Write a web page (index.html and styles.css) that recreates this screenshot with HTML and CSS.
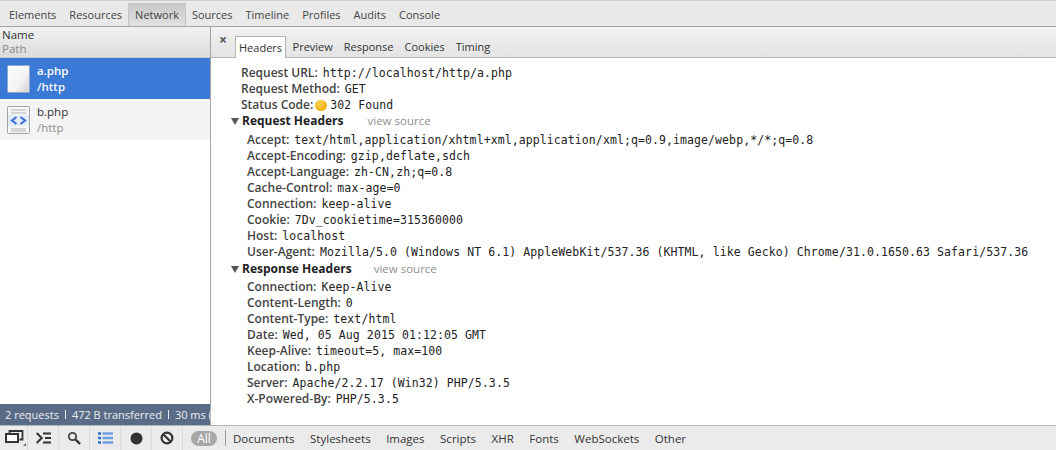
FILE: index.html
```html
<!DOCTYPE html>
<html lang="en">
<head>
<meta charset="utf-8">
<title>Network</title>
<link rel="stylesheet" href="styles.css">
</head>
<body>
<nav class="topbar">
  <span class="toptab">Elements</span>
  <span class="toptab">Resources</span>
  <span class="toptab active">Network</span>
  <span class="toptab">Sources</span>
  <span class="toptab">Timeline</span>
  <span class="toptab">Profiles</span>
  <span class="toptab">Audits</span>
  <span class="toptab">Console</span>
</nav>
<main class="main">
  <aside class="side">
    <div class="side-head"><div>Name</div><div class="dim">Path</div></div>
    <div class="file selected">
      <svg class="ficon" width="23" height="28" viewBox="0 0 23 28"><defs><linearGradient id="pg" x1="0" y1="0" x2="1" y2="1"><stop offset="0" stop-color="#fff"/><stop offset=".6" stop-color="#f3f3f3"/><stop offset="1" stop-color="#cfcfcf"/></linearGradient></defs><rect x=".5" y=".5" width="22" height="27" rx="1" fill="url(#pg)" stroke="#8fa8cc"/></svg>
      <div class="fname"><div>a.php</div><div class="fpath">/http</div></div>
    </div>
    <div class="file">
      <svg class="ficon" width="23" height="28" viewBox="0 0 23 28"><rect x=".5" y=".5" width="22" height="27" rx="1" fill="#f6f6f6" stroke="#a5a5a5"/><path d="M4 4h15M4 7h15M4 23h15M4 25h15" stroke="#b5b5b5"/><rect x="1" y="9" width="21" height="11" fill="#e4ecf8"/><path d="M9.500 11 5 14.500l4.500 3.500M13.500 11 18 14.500 13.500 18" fill="none" stroke="#3b74d6" stroke-width="2.200"/></svg>
      <div class="fname"><div>b.php</div><div class="fpath dim">/http</div></div>
    </div>
    <div class="side-fill"></div>
    <div class="summary">2 requests<i class="sep"></i>472 B transferred<i class="sep"></i>30 ms (</div>
  </aside>
  <section class="detail">
    <div class="tabs">
      <span class="close">×</span>
      <span class="tab active">Headers</span>
      <span class="tab">Preview</span>
      <span class="tab">Response</span>
      <span class="tab">Cookies</span>
      <span class="tab">Timing</span>
    </div>
    <div class="content">
      <div class="row top"><b>Request URL:</b><code>http://localhost/http/a.php</code></div>
      <div class="row top"><b>Request Method:</b><code>GET</code></div>
      <div class="row top"><b>Status Code:</b><i class="dot"></i><code>302 Found</code></div>
      <div class="sect sect-first"><i class="tri"></i><strong>Request Headers</strong><span class="vs vs1">view source</span></div>
      <div class="row"><b>Accept:</b><code>text/html,application/xhtml+xml,application/xml;q=0.9,image/webp,*/*;q=0.8</code></div>
      <div class="row"><b>Accept-Encoding:</b><code>gzip,deflate,sdch</code></div>
      <div class="row"><b>Accept-Language:</b><code>zh-CN,zh;q=0.8</code></div>
      <div class="row"><b>Cache-Control:</b><code>max-age=0</code></div>
      <div class="row"><b>Connection:</b><code>keep-alive</code></div>
      <div class="row"><b>Cookie:</b><code>7Dv_cookietime=315360000</code></div>
      <div class="row"><b>Host:</b><code>localhost</code></div>
      <div class="row"><b>User-Agent:</b><code>Mozilla/5.0 (Windows NT 6.1) AppleWebKit/537.36 (KHTML, like Gecko) Chrome/31.0.1650.63 Safari/537.36</code></div>
      <div class="sect sect-second"><i class="tri"></i><strong>Response Headers</strong><span class="vs">view source</span></div>
      <div class="row"><b>Connection:</b><code>Keep-Alive</code></div>
      <div class="row"><b>Content-Length:</b><code>0</code></div>
      <div class="row"><b>Content-Type:</b><code>text/html</code></div>
      <div class="row"><b>Date:</b><code>Wed, 05 Aug 2015 01:12:05 GMT</code></div>
      <div class="row"><b>Keep-Alive:</b><code>timeout=5, max=100</code></div>
      <div class="row"><b>Location:</b><code>b.php</code></div>
      <div class="row"><b>Server:</b><code>Apache/2.2.17 (Win32) PHP/5.3.5</code></div>
      <div class="row"><b>X-Powered-By:</b><code>PHP/5.3.5</code></div>
    </div>
  </section>
</main>
<footer class="bottombar">
  <span class="bt bt-first"><svg width="22" height="17" viewBox="0 0 22 17"><path d="M4.500 3V1h13v8.500h-3" fill="none" stroke="#333" stroke-width="1.800"/><rect x="1" y="4" width="12" height="8" fill="#fff" stroke="#333" stroke-width="2"/><path d="M21 13v3h-3z" fill="#666"/></svg></span>
  <span class="bt"><svg width="15" height="12" viewBox="0 0 15 12"><path d="m.7 1 5 5-5 5" fill="none" stroke="#333" stroke-width="2"/><path d="M7 1.500h8M9 6h6M7 10.500h8" stroke="#333" stroke-width="1.800"/></svg></span>
  <span class="bt"><svg width="14" height="14" viewBox="0 0 14 14"><circle cx="5.500" cy="5.500" r="3.700" fill="none" stroke="#444" stroke-width="1.800"/><path d="m8.500 8.500 4.500 4.500" stroke="#333" stroke-width="2.400"/></svg></span>
  <span class="bt"><svg width="15" height="12" viewBox="0 0 15 12"><path d="M0 1.500h3M0 6h3M0 10.500h3" stroke="#2d6fd0" stroke-width="2.600"/><path d="M4.500 1.500H15M4.500 6H15M4.500 10.500H15" stroke="#6f9fe0" stroke-width="2.400"/></svg></span>
  <span class="bt"><svg width="13" height="13" viewBox="0 0 13 13"><circle cx="6.500" cy="6.500" r="6" fill="#333"/></svg></span>
  <span class="bt"><svg width="14" height="14" viewBox="0 0 14 14"><circle cx="7" cy="7" r="5.400" fill="none" stroke="#333" stroke-width="2.200"/><path d="m3 3 8 8" stroke="#333" stroke-width="2.200"/></svg></span>
  <span class="pill">All</span>
  <span class="vsep"></span>
  <span class="filter">Documents</span>
  <span class="filter">Stylesheets</span>
  <span class="filter">Images</span>
  <span class="filter">Scripts</span>
  <span class="filter">XHR</span>
  <span class="filter">Fonts</span>
  <span class="filter">WebSockets</span>
  <span class="filter">Other</span>
</footer>
</body>
</html>
```
FILE: styles.css
```css
* { box-sizing: border-box; }
html, body { margin: 0; height: 100%; }
body {
  width: 1056px; height: 450px; overflow: hidden;
  display: flex; flex-direction: column;
  font-family: "Open Sans", "Noto Sans", sans-serif;
  font-size: 11.500px; color: #333; background: #fff;
}
.topbar {
  height: 27px; flex: none; display: flex; align-items: stretch;
  padding: 2px 0 0 2px;
  background: #e9e9e9; border-top: 1px solid #cfcfcf; border-bottom: 1px solid #a3a3a3;
  font-size: 11px; color: #444;
}
.toptab { padding: 3px 6px 0; line-height: 16px; white-space: nowrap; border: 1px solid transparent; border-bottom: 0; margin-right: -1px; }
.toptab.active { background: linear-gradient(#c8c8c8, #e2e2e2); border-color: #c4c4c4; }
.main { flex: 1; min-height: 0; display: flex; }
.side { width: 211px; flex: none; display: flex; flex-direction: column; border-right: 1px solid #a3a3a3; background: #fff; }
.side-head { height: 31px; flex: none; padding: 1px 2px; line-height: 14px; background: linear-gradient(#f2f2f2, #dcdcdc); border-bottom: 1px solid #c8c8c8; }
.dim { color: #8a8a8a; }
.file { height: 41px; flex: none; display: flex; align-items: center; gap: 7px; padding-left: 7px; background: #f4f4f4; line-height: 16px; }
.file.selected { background: #3b79d6; color: #fff; font-weight: 600; }
.ficon { flex: none; }
.fpath { opacity: .95; }
.side-fill { flex: 1; }
.summary { height: 21px; flex: none; padding: 0 5px; line-height: 20px; background: #5a6b86; color: #e9edf3; white-space: nowrap; font-size: 11px; display: flex; align-items: center; }
.sep { width: 1px; height: 9px; background: #e9edf3; margin: 0 6px; flex: none; }
.detail { flex: 1; min-width: 0; display: flex; flex-direction: column; }
.tabs { height: 31px; flex: none; display: flex; align-items: flex-end; padding-left: 8px; background: linear-gradient(#f2f2f2, #e4e4e4); border-bottom: 1px solid #b5b5b5; font-size: 11px; }
.close { width: 16px; align-self: flex-start; margin-top: 6px; font-size: 14px; line-height: 14px; color: #555; font-weight: 700; }
.tab { height: 21px; padding: 3px 5.500px 0; line-height: 16px; }
.tab.active { background: #fff; border: 1px solid #b5b5b5; border-bottom: 0; height: 22px; margin-bottom: -1px; padding: 3px 3px 0; margin-right: 1px; }
.content { flex: 1; padding: 7px 0 0 20px; }
.row { height: 16px; line-height: 16px; padding-left: 16px; white-space: nowrap; display: flex; align-items: center; font-size: 12px; }
.row.top { padding-left: 10px; }
.row b { font-weight: 600; color: #444; margin-right: 5px; }
code { font-family: "DejaVu Sans Mono", monospace; font-size: 11.500px; letter-spacing: .09px; color: #222; }
.dot { width: 12px; height: 11px; border-radius: 50%; background: radial-gradient(circle at 40% 35%, #ffd34d, #eaa000); margin: 0 3px 0 -3px; flex: none; }
.sect { height: 16px; line-height: 16px; display: flex; align-items: center; font-size: 12px; }
.sect-first { margin-bottom: 3px; }
.sect-second { margin: 1px 0 2px; }
.sect strong { font-weight: 700; color: #222; }
.tri { width: 0; height: 0; border: 4px solid transparent; border-top: 7px solid #555; border-bottom: 0; margin-right: 3px; }
.vs { color: #8f8f8f; margin-left: 22px; font-size: 11.500px; }
.vs1 { margin-left: 24px; }
.bottombar { height: 25px; flex: none; display: flex; align-items: center; background: #ebebeb; border-top: 1px solid #b5b5b5; }
.bt { width: 31px; height: 24px; display: flex; align-items: center; justify-content: center; flex: none; border-right: 1px solid #dadada; }
.bt-first { width: 28px; justify-content: flex-start; padding-left: 5px; }
.pill { margin-left: 8px; width: 26px; height: 15px; line-height: 15px; text-align: center; border-radius: 8px; background: #a8a8a8; color: #fff; font-size: 12px; flex: none; }
.vsep { width: 1px; height: 16px; background: #9a9a9a; margin: 0 7px 0 8px; flex: none; }
.filter { margin-right: 15.500px; white-space: nowrap; }
```
